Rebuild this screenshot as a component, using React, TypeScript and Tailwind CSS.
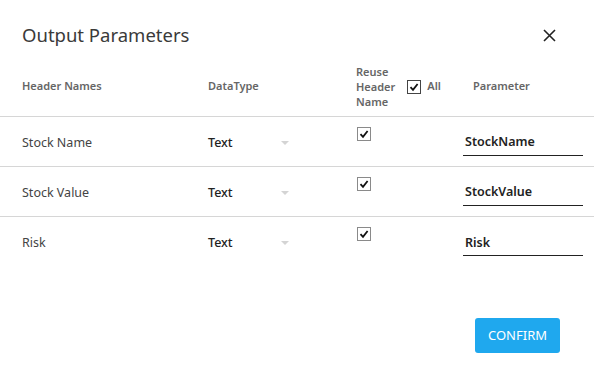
import React from 'react';

const rows = [
  { name: 'Stock Name', type: 'Text', param: 'StockName' },
  { name: 'Stock Value', type: 'Text', param: 'StockValue' },
  { name: 'Risk', type: 'Text', param: 'Risk' },
];

function Check({ size = 14, border = '#555' }: { size?: number; border?: string }) {
  return (
    <span
      className="flex items-center justify-center border bg-white"
      style={{ width: size, height: size, borderColor: border }}
    >
      <svg width={size - 4} height={size - 4} viewBox="0 0 10 10" fill="none">
        <path d="M1.5 5.2 L4 7.8 L8.6 2" stroke="#111" strokeWidth="1.8" />
      </svg>
    </span>
  );
}

export default function App() {
  return (
    <div className="w-[594px] h-[377px] bg-white font-['Noto_Sans',sans-serif] flex flex-col">
      {/* Title */}
      <div className="flex items-center justify-between pl-[22px] pr-[38px] pt-[12px] h-[57px]">
        <h1 className="text-[18.5px] text-[#3a3a3a] font-normal leading-[24px]">Output Parameters</h1>
        <svg width="13" height="13" viewBox="0 0 13 13" className="mt-[1px]">
          <path d="M1 1 L12 12 M12 1 L1 12" stroke="#222" strokeWidth="1.6" />
        </svg>
      </div>

      {/* Header */}
      <div className="grid grid-cols-[186px_148px_107px_120px] pl-[22px] h-[60px] items-center border-b border-[#d6d6d6] text-[11px] font-semibold text-[#666]">
        <div>Header Names</div>
        <div>DataType</div>
        <div className="flex items-center gap-[12px]">
          <div className="leading-[15px]">
            Reuse
            <br />
            Header
            <br />
            Name
          </div>
          <div className="flex items-center gap-[6px]">
            <Check size={14} border="#444" />
            <span>All</span>
          </div>
        </div>
        <div className="pl-[10px]">Parameter</div>
      </div>

      {/* Rows */}
      {rows.map((r, i) => (
        <div
          key={r.param}
          className={`grid grid-cols-[186px_148px_107px_120px] pl-[22px] h-[50px] items-center ${
            i < rows.length - 1 ? 'border-b border-[#d6d6d6]' : ''
          }`}
        >
          <div className="text-[12.5px] text-[#444] pt-[3px]">{r.name}</div>
          <div className="flex items-center pt-[3px]">
            <span className="text-[12.5px] font-medium text-[#222] w-[73px]">{r.type}</span>
            <svg width="8" height="5" viewBox="0 0 8 5">
              <path d="M0 0 L8 0 L4 4 Z" fill="#d4d4d4" />
            </svg>
          </div>
          <div className="self-start flex pt-[10px] pl-[1px]">
            <Check size={14} border="#8a8a8a" />
          </div>
          <div className="pt-[6px]">
            <div className="border-b-[1.5px] border-[#222] pb-[3px] pl-[2px] text-[12.5px] font-semibold text-[#222]">
              {r.param}
            </div>
          </div>
        </div>
      ))}

      {/* Footer */}
      <div className="flex-1 flex items-start justify-end pr-[34px] pt-[51px]">
        <button className="w-[85px] h-[35px] rounded-[3px] bg-[#1fa8ee] text-white text-[13px] font-normal">
          CONFIRM
        </button>
      </div>
    </div>
  );
}
